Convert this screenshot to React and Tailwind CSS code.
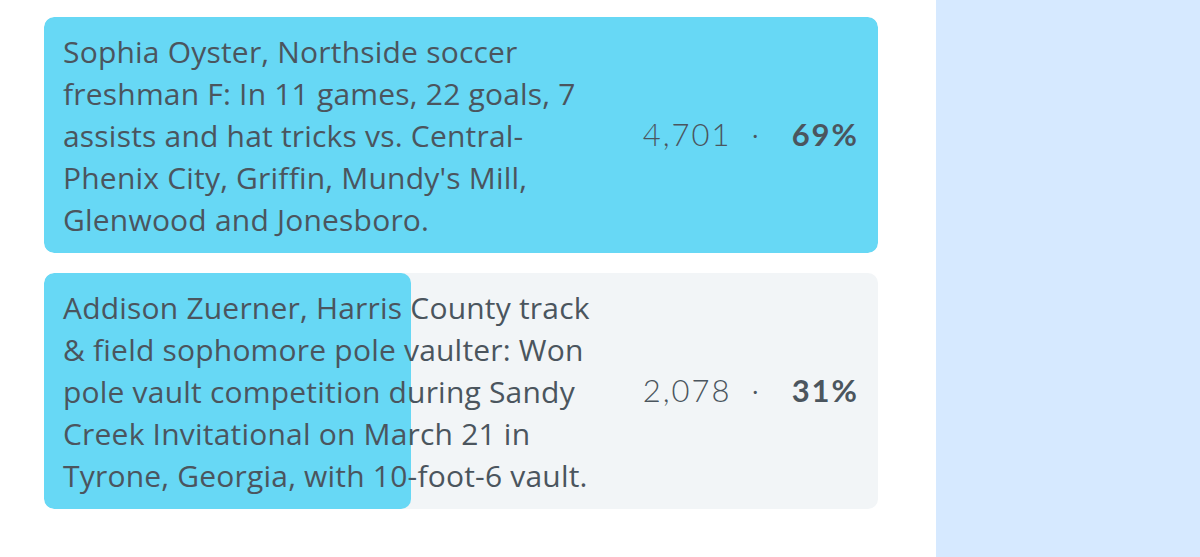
const options = [
  {
    id: 1,
    text: "Sophia Oyster, Northside soccer freshman F: In 11 games, 22 goals, 7 assists and hat tricks vs. Central-Phenix City, Griffin, Mundy's Mill, Glenwood and Jonesboro.",
    votes: '4,701',
    pct: '69%',
    fill: '100%',
  },
  {
    id: 2,
    text: 'Addison Zuerner, Harris County track & field sophomore pole vaulter: Won pole vault competition during Sandy Creek Invitational on March 21 in Tyrone, Georgia, with 10-foot-6 vault.',
    votes: '2,078',
    pct: '31%',
    fill: '44%',
  },
];

function PollOption({ option }) {
  return (
    <div className="relative rounded-[10px] bg-[#f2f5f7] overflow-hidden">
      <div
        className="absolute inset-y-0 left-0 rounded-[10px] bg-[#67d8f5]"
        style={{ width: option.fill }}
      />
      <div className="relative flex items-center pl-[19px] pr-[19px] pt-[14px] pb-[12px]">
        <p className="w-[550px] text-[30px] leading-[42px] tracking-[0.2px] text-[#4b555e] font-['Open_Sans',sans-serif]">
          {option.text}
        </p>
        <div className="ml-auto flex items-center pb-[3px] text-[31px] tracking-[2px] text-[#4b555e] font-['Lato',sans-serif]">
          <span className="font-light">{option.votes}</span>
          <span className="ml-[20px] mr-[26px] font-light">·</span>
          <span className="w-[72px] text-right font-bold">{option.pct}</span>
        </div>
      </div>
    </div>
  );
}

export default function App() {
  return (
    <div className="flex h-[557px] w-[1200px] bg-white">
      <main className="flex-1 pl-[44px] pr-[58px] pt-[17px]">
        <div className="flex flex-col gap-[20px]">
          {options.map(o => (
            <PollOption key={o.id} option={o} />
          ))}
        </div>
      </main>
      <aside className="w-[264px] bg-[#d6e9ff]" />
    </div>
  );
}
